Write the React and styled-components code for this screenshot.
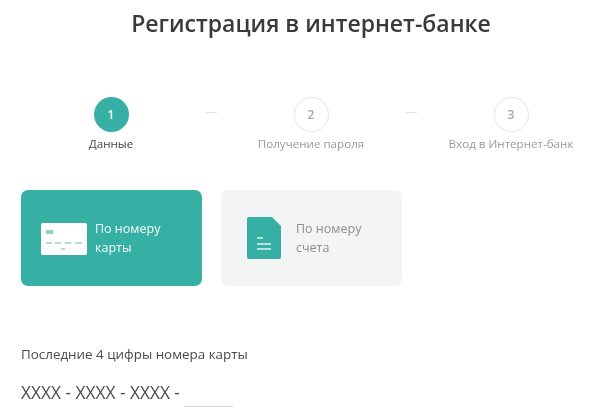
import React from "react";
import styled, { createGlobalStyle } from "styled-components";

const Global = createGlobalStyle`
  html, body { margin: 0; padding: 0; background: #fff; overflow: hidden; }
  body { font-family: "Open Sans", "Noto Sans", sans-serif; }
`;
const Page = styled.div`
  width: 600px; height: 415px; overflow: hidden; box-sizing: border-box;
  padding: 0 21px; filter: blur(0.3px);
`;
const Title = styled.h1`
  margin: 0 0 0 22px; padding-top: 6px; height: 97px; box-sizing: border-box;
  text-align: center; font-size: 23px; line-height: 34px; font-weight: 600; color: #3a3a3a;
`;
const Steps = styled.div`
  display: flex; justify-content: center; align-items: flex-start;
  width: 600px; margin-left: -21px; padding-left: 22px; box-sizing: border-box;
`;
const Step = styled.div`
  width: 140px; display: flex; flex-direction: column; align-items: center;
`;
const Circle = styled.div`
  width: 35px; height: 35px; box-sizing: border-box; border-radius: 50%;
  display: flex; align-items: center; justify-content: center;
  font-size: 12px; font-weight: 600;
  background: ${p => (p.$active ? "#36b0a4" : "#fff")};
  border: ${p => (p.$active ? "none" : "1px solid #e4e4e4")};
  color: ${p => (p.$active ? "#fff" : "#a8a8a8")};
`;
const StepLabel = styled.div`
  margin-top: 4px; font-size: 11.6px; line-height: 16px; white-space: nowrap;
  color: ${p => (p.$active ? "#444" : "#9a9a9a")};
`;
const Dash = styled.div`
  width: 60px; height: 16px; display: flex; justify-content: center; align-items: flex-end;
  &::after { content: ""; width: 11px; height: 1px; background: #e2e2e2; }
`;
const Cards = styled.div`
  display: flex; gap: 19px; margin-top: 38px;
`;
const Card = styled.div`
  width: 181px; height: 96px; box-sizing: border-box; border-radius: 7px;
  display: flex; align-items: center;
  padding-left: ${p => p.$pad}px; gap: ${p => p.$gap}px;
  background: ${p => (p.$active ? "#36b0a4" : "#f3f4f6")};
  color: ${p => (p.$active ? "#f2fbfa" : "#8e8e8e")};
  font-size: 12.5px; line-height: 19px;
`;
const Field = styled.div`
  margin-top: 60px; font-size: 13.4px; line-height: 17px; color: #4a4a4a;
`;
const Mask = styled.div`
  display: flex; align-items: flex-end; gap: 5px; margin-top: 20px;
  font-size: 17.3px; line-height: 20px; color: #4a4a4a;
`;
const Blank = styled.div`
  width: 48px; height: 20px; margin-bottom: -4px; border-bottom: 1px solid #d8d8d8;
`;
const CardGlyph = styled.svg`
  margin-top: 2px;
`;

const CardIcon = () => (
  <CardGlyph width="46" height="32" viewBox="0 0 46 32">
    <rect width="46" height="32" rx="2" fill="#fff" />
    <rect x="5" y="7" width="7" height="4" fill="#8fcfc8" />
    <path d="M5 20h6M14 20h6M24 20h6M34 20h7M20 26h4" stroke="#5fb9af" strokeWidth="1.1" />
  </CardGlyph>
);
const DocIcon = () => (
  <svg width="34" height="42" viewBox="0 0 34 42">
    <path d="M2 0H25L34 9V40a2 2 0 0 1-2 2H2a2 2 0 0 1-2-2V2a2 2 0 0 1 2-2Z" fill="#36b0a4" />
    <path d="M10 21h6M10 27h14M10 32h14" stroke="#dff4f1" strokeWidth="1.4" />
  </svg>
);

export default function App() {
  return (
    <Page>
      <Global />
      <Title>Регистрация в интернет-банке</Title>
      <Steps>
        <Step><Circle $active>1</Circle><StepLabel $active>Данные</StepLabel></Step>
        <Dash />
        <Step><Circle>2</Circle><StepLabel>Получение пароля</StepLabel></Step>
        <Dash />
        <Step><Circle>3</Circle><StepLabel>Вход в Интернет-банк</StepLabel></Step>
      </Steps>
      <Cards>
        <Card $active $pad={20} $gap={8}><CardIcon /><span>По номеру<br />карты</span></Card>
        <Card $pad={26} $gap={15}><DocIcon /><span>По номеру<br />счета</span></Card>
      </Cards>
      <Field>Последние 4 цифры номера карты</Field>
      <Mask><span>XXXX - XXXX - XXXX -</span><Blank /></Mask>
    </Page>
  );
}
